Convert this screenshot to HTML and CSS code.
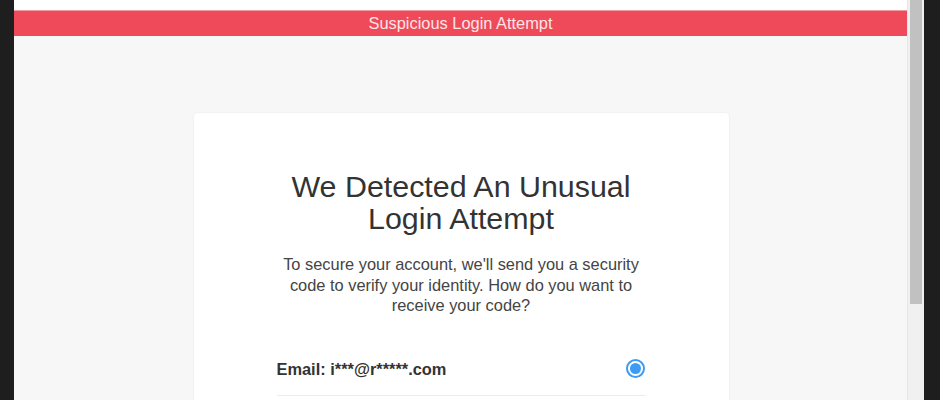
FILE: index.html
```html
<!DOCTYPE html>
<html>
<head>
<meta charset="utf-8">
<link rel="stylesheet" href="styles.css">
</head>
<body>
<div class="frame">
  <div class="edge edge-left"></div>
  <div class="page">
    <div class="topstrip"></div>
    <div class="alertbar">Suspicious Login Attempt</div>
    <div class="content">
      <div class="card">
        <h1 class="title">We Detected An Unusual Login Attempt</h1>
        <p class="lead">To secure your account, we'll send you a security code to verify your identity. How do you want to receive your code?</p>
        <label class="option">
          <span class="option-label">Email: i***@r*****.com</span>
          <span class="radio"><span class="radio-dot"></span></span>
        </label>
      </div>
    </div>
  </div>
  <div class="scrollbar"><div class="thumb"></div></div>
  <div class="edge edge-right"></div>
</div>
</body>
</html>
```
FILE: styles.css
```css
html, body {
  margin: 0;
  padding: 0;
  height: 400px;
  overflow: hidden;
  background: #1e1e1e;
  font-family: "Liberation Sans", Arial, sans-serif;
}
.frame {
  display: flex;
  height: 400px;
}
.edge {
  background: #1e1e1e;
}
.edge-left { width: 14px; flex-shrink: 0; }
.edge-right { flex: 1; }
.page {
  width: 893px;
  flex-shrink: 0;
  background: #f7f7f7;
  display: flex;
  flex-direction: column;
  overflow: hidden;
}
.topstrip {
  flex-shrink: 0;
  height: 10px;
  background: #ffffff;
}
.alertbar {
  flex-shrink: 0;
  height: 25px;
  border-top: 1px solid #f59aa2;
  background: #ee4a5a;
  color: #fde4e6;
  font-size: 16.4px;
  line-height: 25px;
  text-align: center;
}
.content {
  flex-shrink: 0;
  display: flex;
  justify-content: center;
  padding-top: 77px;
}
.card {
  width: 369px;
  padding: 57px 83px 40px;
  background: #ffffff;
  border-radius: 4px;
  box-shadow: 0 0 2px rgba(0,0,0,0.08);
  margin-left: 1px;
}
.title {
  margin: 0;
  font-weight: normal;
  font-size: 30.4px;
  line-height: 32px;
  color: #333333;
  text-align: center;
}
.lead {
  margin: 20px 0 0;
  font-size: 16.4px;
  line-height: 20.5px;
  color: #444444;
  text-align: center;
}
.option {
  margin-top: 28px;
  height: 51px;
  display: flex;
  align-items: center;
  justify-content: space-between;
  border-bottom: 1px solid #ececec;
}
.option-label {
  font-size: 16.4px;
  font-weight: bold;
  color: #333333;
}
.radio {
  width: 15px;
  height: 15px;
  border: 2px solid #3d9bf3;
  border-radius: 50%;
  display: flex;
  align-items: center;
  justify-content: center;
  margin-right: 1px;
  margin-top: -1px;
}
.radio-dot {
  width: 11px;
  height: 11px;
  border-radius: 50%;
  background: #3d9bf3;
}
.scrollbar {
  width: 17px;
  flex-shrink: 0;
  background: #f0f0f0;
  border-left: 1px solid #e6e6e6;
  box-sizing: border-box;
  padding: 0 2px 0 2px;
}
.thumb {
  height: 304px;
  background: #c1c1c1;
}
```
